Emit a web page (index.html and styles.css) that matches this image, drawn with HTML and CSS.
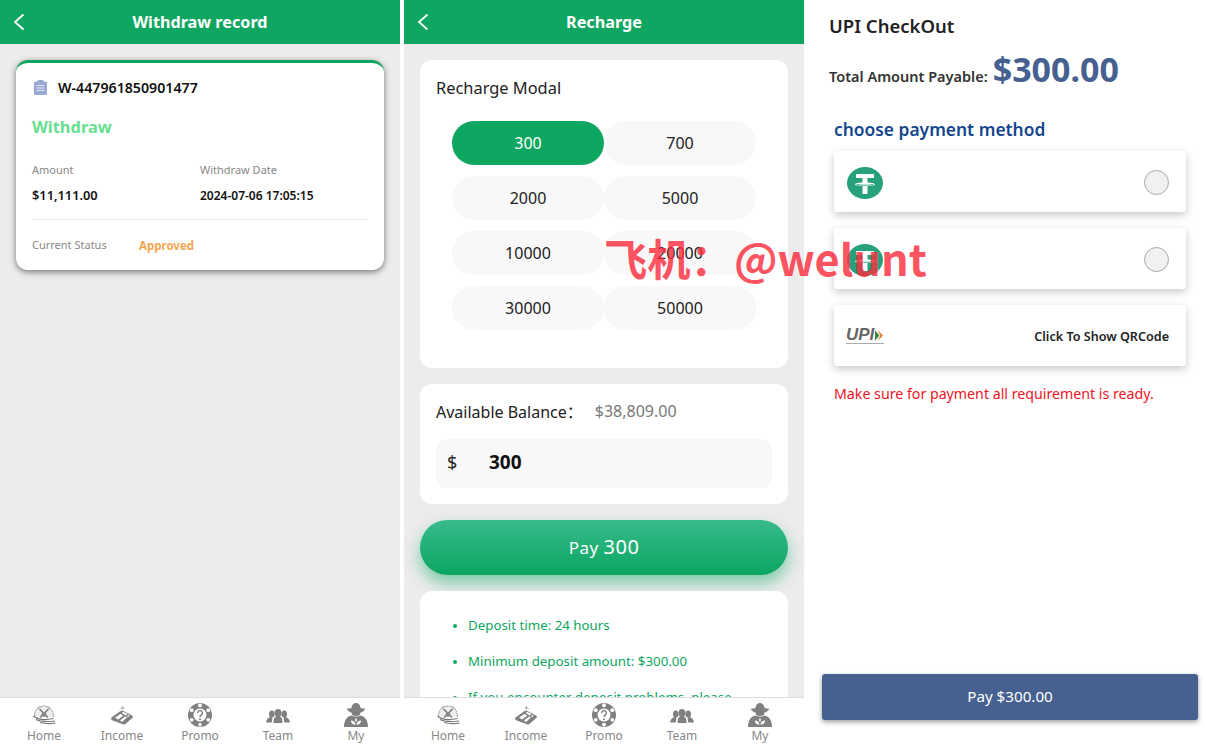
FILE: index.html
```html
<!DOCTYPE html>
<html lang="en">
<head>
<meta charset="utf-8">
<title>Recharge</title>
<link rel="stylesheet" href="styles.css">
</head>
<body>
<svg class="sprite" aria-hidden="true">
  <symbol id="i-home" viewBox="0 0 24 20">
    <path d="M2.500 11A9.500 9.500 0 0 1 21 7.500L21.500 12" fill="#eee" stroke="#888" stroke-width="1" stroke-dasharray="1.600 .7"/>
    <path d="M1.500 11c4 3.500 11 4.500 20 2.500M4 14.500c4 2 11 2.500 19 1.500M8 17.500c4 1 10 1.500 15.500.5" fill="none" stroke="#777" stroke-width="1.100"/>
    <path d="M12 8.500 7.500 4M12 8.500l4.500-4.500M12 8.500l-4 4M12 8.500l4 4" stroke="#777" stroke-width="1.500"/>
    <circle cx="12" cy="9.500" r="2.400" fill="#888"/>
    <path d="M5 3.500 8.500 1.500M15 1.500l3.500 2" stroke="#aaa" stroke-width="1.300"/>
  </symbol>
  <symbol id="i-income" viewBox="0 0 24 19">
    <path d="M1.500 11.500 10.500 5c1-.7 2-.7 3 0l8.500 4.500c1.200.7 1.200 1.800.3 2.500L16 17.600c-1 .9-2 1-3 .6L2.600 14.500c-1.400-.6-1.800-2-1.100-3Z" fill="#808080"/>
    <path d="m5 11.800 5.300-3.900 3 1.700-5 4ZM11.800 6.900l1.500-1.100 4.300 2.300-1.800 1.400ZM10 14.500l5-4 1.900 1-4.800 4.500ZM16.800 10.200l2.100-1.300 1 .6-2 1.700Z" fill="#fff"/>
    <path d="M12.500 3.800V.5M10.500 3 12.500.5l2 2.500" fill="none" stroke="#aaa" stroke-width=".9"/>
  </symbol>
  <symbol id="i-promo" viewBox="0 0 24 24">
    <circle cx="12" cy="12" r="12" fill="#808080"/>
    <circle cx="12" cy="12" r="6.500" fill="#fff"/>
    <g fill="#fff">
      <circle cx="12" cy="2.400" r="1.900"/><circle cx="12" cy="21.600" r="1.900"/>
      <circle cx="3.700" cy="7.200" r="1.900"/><circle cx="20.300" cy="7.200" r="1.900"/>
      <circle cx="3.700" cy="16.800" r="1.900"/><circle cx="20.300" cy="16.800" r="1.900"/>
    </g>
    <path d="M9.600 10a2.400 2.400 0 1 1 3.600 2.100c-.8.500-1.200 1-1.200 1.900" fill="none" stroke="#808080" stroke-width="1.500"/>
    <circle cx="12" cy="16.200" r="1" fill="#808080"/>
  </symbol>
  <symbol id="i-team" viewBox="0 0 24 14">
    <g fill="#808080">
      <ellipse cx="12" cy="4" rx="3.400" ry="4"/>
      <ellipse cx="5.800" cy="5" rx="2.800" ry="3.500"/>
      <ellipse cx="18.200" cy="5" rx="2.800" ry="3.500"/>
      <path d="M7.500 14c0-5 1.500-7 4.500-7s4.500 2 4.500 7Z"/>
      <path d="M0 13.500c.5-3.500 2.500-5.500 5.500-5.500 1 0 1 .8.800 1.500L5.800 13.500ZM24 13.500c-.5-3.500-2.500-5.500-5.500-5.500-1 0-1 .8-.8 1.500l.5 4Z"/>
    </g>
  </symbol>
  <symbol id="i-my" viewBox="0 0 24 24">
    <path d="M7.500 5C7.800 1.800 9.500 0 12 0s4.200 1.800 4.500 5c2 .6 3.500.8 5 .7C20 8.200 18 9.200 16.500 9.600 16.300 10.800 16 11 16 12c-2.600 1.200-5.400 1.200-8 0 0-1-.3-1.200-.5-2.400C6 9.200 4 8.200 2.500 5.700c1.500.1 3-.1 5-.7Z" fill="#808080"/>
    <path d="M0 24c0-6.500 2.500-10 7-11.500 3 1.400 7 1.400 10 0 4.500 1.500 7 5 7 11.500Z" fill="#808080"/>
    <path d="M12 15c1.200 1.300 1.200 2.800 0 4-1.200-1.200-1.200-2.700 0-4ZM6.800 17.500c2.600 0 4.400 1.500 4.700 4.300-2.800-.1-4.400-1.700-4.700-4.300ZM17.200 17.500c-2.600 0-4.400 1.500-4.700 4.300 2.800-.1 4.400-1.700 4.700-4.300Z" fill="#fff"/>
  </symbol>
  <symbol id="i-tether" viewBox="0 0 36 36" preserveAspectRatio="none">
    <circle cx="18" cy="18" r="18" fill="#26a17b"/>
    <path d="M9 8h18v4.500h-6.500v4.800c4.200.2 7.500 1 7.500 2s-3.300 1.800-7.500 2v9.200h-5v-9.200C11.300 21.100 8 20.300 8 19.300s3.300-1.800 7.500-2v-4.800H9Z" fill="#fff"/>
    <path d="M9.500 19.300c1.500.8 5 1.200 8.500 1.200s7-.4 8.500-1.200" fill="none" stroke="#26a17b" stroke-width="1"/>
  </symbol>
  <symbol id="i-back" viewBox="0 0 12 18">
    <path d="M10.500 1.500 2 9l8.500 7.500" fill="none" stroke="#fff" stroke-width="1.800"/>
  </symbol>
</svg>

<main class="app">
  <section class="phone">
    <header class="topbar">
      <svg class="back"><use href="#i-back"/></svg>
      <h1 class="topbar-title">Withdraw record</h1>
    </header>
    <div class="content">
      <article class="record">
        <div class="record-id">
          <svg class="clip" viewBox="0 0 13 15">
            <rect y="1.500" width="13" height="13.500" rx="1.500" fill="#97a9d2"/>
            <rect x="3.500" width="6" height="3" rx="1" fill="#97a9d2"/>
            <path d="M2.500 5.500h8M2.500 8h8M2.500 10.500h8" stroke="#e4e9f4" stroke-width="1"/>
          </svg>
          <span>W-447961850901477</span>
        </div>
        <div class="record-type">Withdraw</div>
        <div class="record-grid">
          <div class="record-col">
            <span class="record-label">Amount</span>
            <strong class="record-value">$11,111.00</strong>
          </div>
          <div class="record-col">
            <span class="record-label">Withdraw Date</span>
            <strong class="record-value record-date">2024-07-06 17:05:15</strong>
          </div>
        </div>
        <div class="record-status">
          <span class="record-label status-label">Current Status</span>
          <strong class="status-value">Approved</strong>
        </div>
      </article>
    </div>
    <nav class="tabbar">
      <a class="tab"><span class="tab-slot"><svg class="icon-home"><use href="#i-home"/></svg></span><span>Home</span></a>
      <a class="tab"><span class="tab-slot"><svg class="icon-income"><use href="#i-income"/></svg></span><span>Income</span></a>
      <a class="tab"><span class="tab-slot"><svg class="icon-full"><use href="#i-promo"/></svg></span><span>Promo</span></a>
      <a class="tab"><span class="tab-slot"><svg class="icon-team"><use href="#i-team"/></svg></span><span>Team</span></a>
      <a class="tab"><span class="tab-slot"><svg class="icon-full"><use href="#i-my"/></svg></span><span>My</span></a>
    </nav>
  </section>

  <section class="phone">
    <header class="topbar">
      <svg class="back"><use href="#i-back"/></svg>
      <h1 class="topbar-title">Recharge</h1>
    </header>
    <div class="content recharge">
      <div class="panel modal-panel">
        <h2 class="panel-title">Recharge Modal</h2>
        <div class="amounts">
          <button class="amount active">300</button>
          <button class="amount">700</button>
          <button class="amount">2000</button>
          <button class="amount">5000</button>
          <button class="amount">10000</button>
          <button class="amount">20000</button>
          <button class="amount">30000</button>
          <button class="amount">50000</button>
        </div>
      </div>
      <div class="panel balance-panel">
        <div class="balance-row">
          <span class="balance-label">Available Balance：</span>
          <span class="balance-value">$38,809.00</span>
        </div>
        <div class="amount-input">
          <span class="currency">$</span>
          <strong class="amount-value">300</strong>
        </div>
      </div>
      <button class="pay-pill">Pay <span class="pay-num">300</span></button>
      <div class="panel notes">
        <ul class="notes-list">
          <li>Deposit time: 24 hours</li>
          <li>Minimum deposit amount: $300.00</li>
          <li>If you encounter deposit problems, please contact customer service</li>
        </ul>
      </div>
    </div>
    <nav class="tabbar">
      <a class="tab"><span class="tab-slot"><svg class="icon-home"><use href="#i-home"/></svg></span><span>Home</span></a>
      <a class="tab"><span class="tab-slot"><svg class="icon-income"><use href="#i-income"/></svg></span><span>Income</span></a>
      <a class="tab"><span class="tab-slot"><svg class="icon-full"><use href="#i-promo"/></svg></span><span>Promo</span></a>
      <a class="tab"><span class="tab-slot"><svg class="icon-team"><use href="#i-team"/></svg></span><span>Team</span></a>
      <a class="tab"><span class="tab-slot"><svg class="icon-full"><use href="#i-my"/></svg></span><span>My</span></a>
    </nav>
  </section>

  <section class="checkout">
    <h1 class="checkout-title">UPI CheckOut</h1>
    <div class="payable">
      <span class="payable-label">Total Amount Payable:</span>
      <strong class="payable-value">$300.00</strong>
    </div>
    <h2 class="method-title">choose payment method</h2>
    <div class="methods">
      <label class="method">
        <span class="coin"><svg class="coin-svg"><use href="#i-tether"/></svg></span>
        <span class="radio"></span>
      </label>
      <label class="method">
        <span class="coin"><svg class="coin-svg"><use href="#i-tether"/></svg></span>
        <span class="radio"></span>
      </label>
      <label class="method">
        <span class="upi">
          <span class="upi-word">UPI<svg class="upi-arrow" viewBox="0 0 9 12"><path d="M0 0 5 6 0 12Z" fill="#3f8a3a"/><path d="M3 0 9 6 3 12 6 6Z" fill="#e8762b"/></svg></span>
          <span class="upi-line"></span>
        </span>
        <span class="qr-text">Click To Show QRCode</span>
      </label>
    </div>
    <p class="warning">Make sure for payment all requirement is ready.</p>
    <button class="checkout-pay">Pay $300.00</button>
  </section>

  <div class="watermark">飞机：@welunt</div>
</main>
</body>
</html>
```
FILE: styles.css
```css
* { box-sizing: border-box; }
html, body { margin: 0; padding: 0; }
body {
  width: 1205px;
  height: 746px;
  overflow: hidden;
  background: #fff;
  font-family: "Noto Sans", "Noto Sans CJK SC", sans-serif;
  color: #111;
}
.sprite { display: none; }

.app { position: relative; display: flex; height: 746px; }

.phone {
  width: 400px;
  flex: none;
  display: flex;
  flex-direction: column;
  height: 746px;
  background: #ececec;
}
.phone + .phone { margin-left: 4px; }

.topbar {
  height: 44px;
  flex: none;
  background: #0ea661;
  display: flex;
  align-items: center;
  justify-content: center;
  position: relative;
}
.back { position: absolute; left: 13px; top: 13px; width: 12px; height: 18px; }
.topbar-title { margin: 0; font-size: 16.200px; font-weight: 700; color: #fff; line-height: 44px; }

.content { flex: 1; min-height: 0; overflow: hidden; padding: 16px; }

.record {
  height: 210px;
  background: #fff;
  border-top: 3px solid #0ea661;
  border-radius: 12px;
  box-shadow: 0 2px 6px rgba(0,0,0,.5);
  padding: 0 16px;
}
.record-id {
  display: flex;
  align-items: center;
  gap: 11px;
  padding: 14px 0 0 2px;
  height: 35px;
  font-size: 14.200px;
  font-weight: 600;
  color: #111;
}
.clip { width: 13px; height: 15px; flex: none; }
.record-type { margin-top: 18px; font-size: 16.400px; line-height: 22px; font-weight: 700; color: #66e08f; }
.record-grid { display: flex; margin-top: 24px; padding-bottom: 15px; border-bottom: 1px solid #eee; }
.record-col { width: 168px; display: flex; flex-direction: column; gap: 9px; }
.record-label { font-size: 11px; line-height: 16px; color: #888; }
.record-value { font-size: 12.800px; line-height: 17px; font-weight: 600; color: #111; }
.record-date { font-size: 12px; }
.record-status { display: flex; align-items: center; margin-top: 17px; }
.status-label { width: 107px; }
.status-value { font-size: 11.500px; font-weight: 700; color: #f5a550; }

.recharge { display: flex; flex-direction: column; gap: 16px; }
.panel { background: #fff; border-radius: 12px; flex: none; }
.modal-panel { height: 308px; padding: 16px; }
.panel-title { margin: 0; font-size: 16.400px; line-height: 24px; font-weight: 400; color: #222; }
.amounts { display: grid; grid-template-columns: 152px 152px; justify-content: center; row-gap: 11px; margin-top: 21px; }
.amount {
  height: 44px;
  border: 0;
  padding: 0;
  border-radius: 22px;
  background: #f8f8f8;
  font: inherit;
  font-size: 16px;
  color: #222;
}
.amount.active { background: #0ea661; color: #fff; }

.balance-panel { height: 120px; padding: 15px 16px; }
.balance-row { display: flex; align-items: center; gap: 12px; height: 24px; }
.balance-label { font-size: 16px; color: #222; }
.balance-value { font-size: 16px; color: #777; }
.amount-input {
  margin-top: 16px;
  height: 49px;
  border-radius: 10px;
  background: #f8f8f8;
  display: flex;
  align-items: center;
  padding: 0 0 3px 11px;
}
.currency { width: 42px; font-size: 18px; color: #222; }
.amount-value { font-size: 19px; font-weight: 700; color: #111; }

.pay-pill {
  flex: none;
  height: 55px;
  padding: 0 0 2px;
  border: 0;
  border-radius: 28px;
  background: linear-gradient(#38ba8d, #0aa660);
  box-shadow: 0 8px 16px rgba(14,166,97,.5);
  color: #fff;
  font: inherit;
  font-size: 17px;
  letter-spacing: .5px;
}
.pay-num { font-size: 20px; letter-spacing: .5px; }

.notes { padding: 24px 16px 16px 48px; }
.notes-list { margin: 0; padding: 0; color: #0ea661; font-size: 13.300px; line-height: 20px; }
.notes-list li { margin-bottom: 16px; }
.notes-list li::marker { font-size: 12px; }

.tabbar {
  height: 49px;
  flex: none;
  background: #fff;
  border-top: 1px solid #ddd;
  display: flex;
  padding: 0 5px;
  position: relative;
  z-index: 1;
}
.tab { width: 78px; display: flex; flex-direction: column; align-items: center; color: #888; font-size: 12px; line-height: 16px; padding-top: 5px; }
.tab-slot { width: 24px; height: 24px; margin-bottom: 1px; display: flex; align-items: center; justify-content: center; }
.icon-full { width: 24px; height: 24px; }
.icon-home { width: 24px; height: 20px; }
.icon-income { width: 24px; height: 19px; }
.icon-team { width: 24px; height: 14px; margin-top: 2px; }

.checkout { flex: 1; min-width: 0; padding: 0 18px; display: flex; flex-direction: column; }
.checkout-title { margin: 13px 7px 0; font-size: 18.500px; line-height: 26px; font-weight: 600; color: #222; }
.payable { display: flex; align-items: baseline; gap: 5px; margin: 4px 7px 0; height: 52px; }
.payable-label { font-size: 14.500px; font-weight: 600; color: #333; }
.payable-value { font-size: 34px; font-weight: 700; color: #46618f; line-height: 52px; }
.method-title { margin: 21px 12px 0; font-size: 17.400px; line-height: 26px; font-weight: 600; color: #14468c; }
.methods { margin: 9px 0 0 12px; width: 352px; display: flex; flex-direction: column; gap: 16px; }
.method {
  height: 61px;
  padding: 2px 17px 0 13px;
  background: #fff;
  border-radius: 3px;
  box-shadow: 0 3px 8px rgba(0,0,0,.22);
  display: flex;
  align-items: center;
  justify-content: space-between;
}
.coin { width: 36px; height: 32px; display: block; }
.coin-svg { width: 36px; height: 32px; display: block; }
.radio { width: 25px; height: 25px; border-radius: 50%; background: #f1f1f1; border: 1px solid #aaa; }
.upi { display: flex; flex-direction: column; width: 42px; margin-left: -1px; }
.upi-word { display: flex; align-items: center; gap: 1px; font-family: "Liberation Sans", sans-serif; font-size: 17px; line-height: 12px; font-style: italic; font-weight: 700; color: #666; }
.upi-arrow { width: 8px; height: 11px; }
.upi-line { display: block; height: 1px; width: 38px; margin-top: 2px; background: #aaa; }
.qr-text { font-size: 12.600px; font-weight: 600; color: #222; }
.warning { margin: 18px 0 0 12px; font-size: 14.200px; line-height: 20px; color: #f0131e; }
.checkout-pay {
  margin: auto 0 26px;
  flex: none;
  width: 376px;
  height: 46px;
  padding: 0 0 2px;
  border: 0;
  border-radius: 3px;
  background: #46618f;
  box-shadow: 0 2px 5px rgba(0,0,0,.4);
  color: #fff;
  font: inherit;
  font-size: 15.200px;
}

.watermark {
  position: absolute;
  left: 604px;
  top: 227px;
  font-family: "Noto Sans CJK SC", sans-serif;
  font-size: 43.300px;
  line-height: 60px;
  font-weight: 700;
  color: rgba(253, 45, 62, .82);
  white-space: nowrap;
  z-index: 5;
}
```
